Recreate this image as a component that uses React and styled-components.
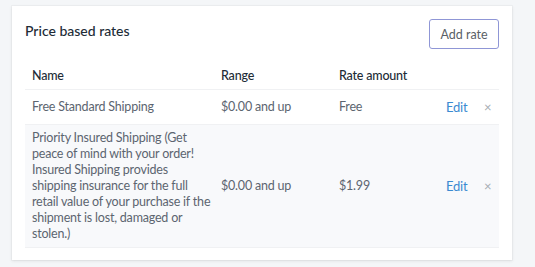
import React from 'react';
import styled, { createGlobalStyle } from 'styled-components';

const GlobalStyle = createGlobalStyle`
  body {
    margin: 0;
    background: #f4f6f8;
    font-family: Lato, "Open Sans", sans-serif;
  }
`;

const rates = [
  { name: 'Free Standard Shipping', range: '$0.00 and up', amount: 'Free' },
  {
    name: 'Priority Insured Shipping (Get peace of mind with your order! Insured Shipping provides shipping insurance for the full retail value of your purchase if the shipment is lost, damaged or stolen.)',
    range: '$0.00 and up',
    amount: '$1.99',
    shaded: true,
  },
];

const App = () => {
  return (
    <Page>
      <GlobalStyle />
      <Card>
        <Header>
          <Title>Price based rates</Title>
          <AddButton>Add rate</AddButton>
        </Header>
        <Table>
          <colgroup>
            <col style={{ width: 189 }} />
            <col style={{ width: 118 }} />
            <col style={{ width: 107 }} />
            <col style={{ width: 38 }} />
            <col />
          </colgroup>
          <thead>
            <tr>
              <Th>Name</Th>
              <Th>Range</Th>
              <Th>Rate amount</Th>
              <Th />
              <Th />
            </tr>
          </thead>
          <tbody>
            {rates.map((r) => (
              <Row key={r.name} $shaded={r.shaded}>
                <NameCell>{r.name}</NameCell>
                <Td>{r.range}</Td>
                <Td>{r.amount}</Td>
                <Td><EditLink>Edit</EditLink></Td>
                <Td><Remove>×</Remove></Td>
              </Row>
            ))}
          </tbody>
        </Table>
      </Card>
    </Page>
  );
};

export default App;

const Page = styled.div`
  width: 535px;
  height: 267px;
  padding: 6px 0 0 12px;
  box-sizing: border-box;
`;

const Card = styled.div`
  width: 500px;
  height: 254px;
  box-sizing: border-box;
  background: #fff;
  padding: 13px 13px 14px 13px;
  box-shadow: 0 0 0 1px rgba(63, 63, 68, 0.03), 0 1px 3px 0 rgba(63, 63, 68, 0.12);
`;

const Header = styled.div`
  display: flex;
  justify-content: space-between;
  align-items: flex-start;
  height: 44px;
`;

const Title = styled.h2`
  margin: 3px 0 0;
  font-size: 14px;
  font-weight: 500;
  color: #212b36;
`;

const AddButton = styled.button`
  width: 70px;
  height: 30px;
  background: #fff;
  border: 1px solid #8f96d6;
  border-radius: 3px;
  font-family: inherit;
  font-size: 12.5px;
  color: #5a5f66;
  padding: 0;
`;

const Table = styled.table`
  width: 100%;
  border-collapse: collapse;
  table-layout: fixed;
  font-size: 12.5px;
  letter-spacing: -0.2px;
`;

const Th = styled.th`
  text-align: left;
  font-weight: 500;
  color: #212b36;
  padding: 0 7px;
  height: 26px;
  line-height: 16px;
  border-bottom: 1px solid #f0f1f3;
`;

const Row = styled.tr`
  height: 35px;
  background: ${(p) => (p.$shaded ? '#f8f9fb' : '#fff')};
  border-bottom: 1px solid #f0f1f3;
`;

const Td = styled.td`
  padding: 5px 7px;
  color: #5c6570;
  line-height: 16px;
  vertical-align: middle;
`;

const NameCell = styled(Td)`
  padding-right: 2px;
`;

const EditLink = styled.a`
  color: #3b8ad1;
  font-size: 13px;
  cursor: pointer;
`;

const Remove = styled.span`
  color: #a6acb2;
  font-size: 13px;
`;
